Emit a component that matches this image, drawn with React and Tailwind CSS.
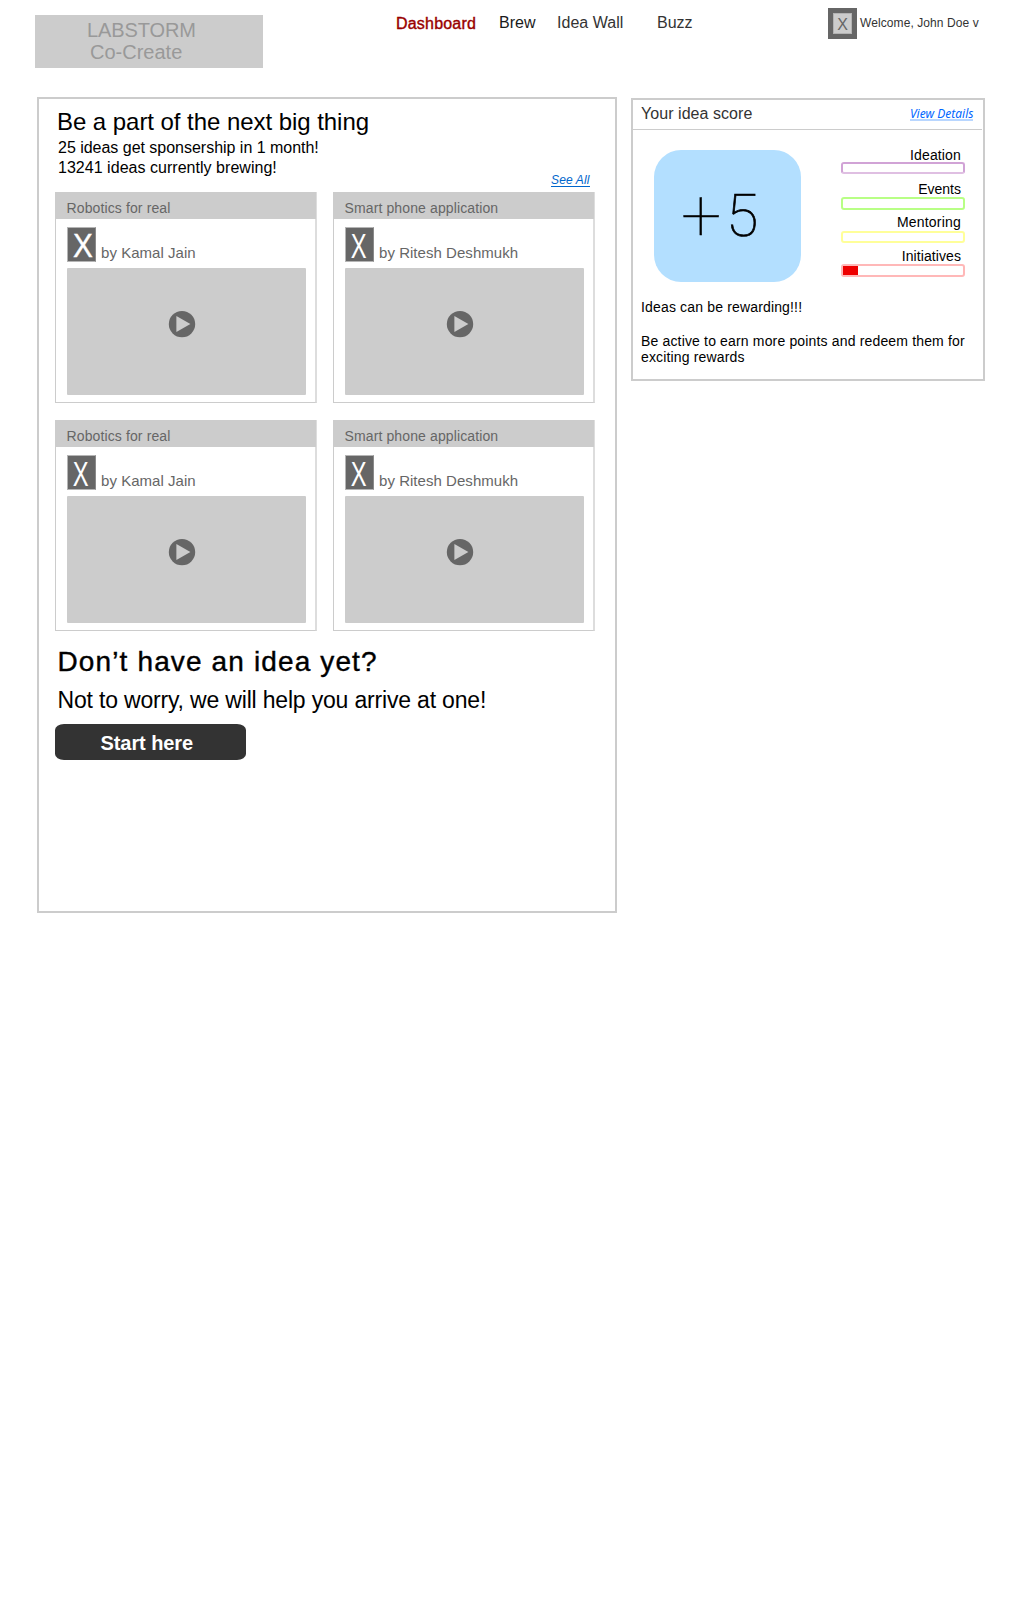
const navItems = [
  { label: 'Dashboard', cls: 'w-[103px] pt-[14px] text-[#990000] tracking-[0.2px] [-webkit-text-stroke:0.4px_#990000]' },
  { label: 'Brew', cls: 'w-[58px] pt-[13px] text-[#1a1a1a]' },
  { label: 'Idea Wall', cls: 'w-[100px] pt-[13px] text-[#333333] tracking-[0.03px]' },
  { label: 'Buzz', cls: 'w-[171px] pt-[13px] text-[#333333]' },
];

const ideas = [
  { title: 'Robotics for real', author: 'by Kamal Jain', wide: true },
  { title: 'Smart phone application', author: 'by Ritesh Deshmukh' },
  { title: 'Robotics for real', author: 'by Kamal Jain' },
  { title: 'Smart phone application', author: 'by Ritesh Deshmukh' },
];

const scores = [
  { label: 'Ideation', row: 'h-[15px] tracking-[0.15px]', bar: 'h-[12px] mb-[7px] border-[#d1a3d6] border-b-[#dfbfe2]' },
  { label: 'Events', row: 'h-[16px]', bar: 'h-[13px] mb-[4px] border-[#b8ff85]' },
  { label: 'Mentoring', row: 'h-[17px] tracking-[0.2px]', bar: 'h-[12px] mb-[5px] border-[#ffff99]' },
  { label: 'Initiatives', row: 'h-[16px] tracking-[0.08px]', bar: 'h-[13px] border-[#ffb8b8]', filled: true },
];

function IdeaCard({ title, author, wide }) {
  return (
    <article className="flex h-[211px] w-[262px] flex-col border-r-2 border-b border-l border-r-[#dddddd] border-b-[#cccccc] border-l-[#cccccc]">
      <h2 className="-mr-px h-[27px] shrink-0 bg-[#cccccc] pt-[8px] pl-[10.5px] text-[14px] leading-[16px] tracking-[0.12px] text-[#666666]">
        {title}
      </h2>
      <div className="flex h-[49px] shrink-0 pl-[11px]">
        <div className="mt-[8px] flex h-[35px] w-[29px] justify-center border border-[#b5b5b5] border-r-[#8a8a8a] bg-[#666666] text-white">
          {wide ? (
            <span className="ml-[4px] block origin-center scale-x-[0.9] text-[33px] leading-[35px] [-webkit-text-stroke:0.4px_white]">X</span>
          ) : (
            <span className="-ml-px block origin-center scale-x-[0.68] text-[35px] leading-[35px]">X</span>
          )}
        </div>
        <p className="mt-[25px] ml-[5px] text-[15px] leading-[18px] tracking-[0.04px] whitespace-nowrap text-[#666666]">{author}</p>
      </div>
      <div className="ml-[11px] h-[127px] w-[239px] rounded-[1px] bg-[#cccccc] pt-[42px] pl-[101px]">
        <svg className="block" width="28" height="28" viewBox="0 0 28 28">
          <circle cx="14" cy="14.1" r="13.2" fill="#666666" />
          <path d="M8.4 6v16L22.4 14z" fill="#cccccc" />
        </svg>
      </div>
    </article>
  );
}

export default function App() {
  return (
    <div className="h-[1600px] w-[1024px] bg-white font-['Liberation_Sans',sans-serif] text-black">
      <header className="flex h-[97px] items-start pl-[35px]">
        <div className="mt-[15px] h-[53px] w-[228px] bg-[#cccccc] pt-[4px] text-[20px] leading-[22px] text-[#999999]">
          <div className="pl-[52px] tracking-[-0.1px]">LABSTORM</div>
          <div className="pl-[55px]">Co-Create</div>
        </div>
        <nav className="ml-[133px] flex text-[16px] leading-[19px]">
          {navItems.map((n) => (
            <a key={n.label} className={n.cls}>{n.label}</a>
          ))}
        </nav>
        <div className="mt-[8px] h-[31px] w-[29px] bg-[#666666] pt-[5px] pl-[5px]">
          <div className="flex h-[21px] w-[19px] justify-center border border-[#b3b3b3] bg-[#cccccc] text-[16px] leading-[21px] text-[#666666]">
            <span className="block">X</span>
          </div>
        </div>
        <span className="mt-[16px] ml-[3px] text-[12px] leading-[14px] tracking-[0.085px] text-[#333333]">Welcome, John Doe v</span>
      </header>

      <main className="flex items-start pl-[37px]">
        <section className="h-[816px] w-[580px] border-2 border-[#cccccc]">
          <div className="flex h-[93px] justify-between pr-[25px]">
            <div className="pt-[9px] pl-[19px]">
              <h1 className="mb-[3px] -ml-px text-[24px] leading-[27px] tracking-[-0.05px]">Be a part of the next big thing</h1>
              <p className="mb-px text-[16px] leading-[19px] tracking-[-0.02px]">25 ideas get sponsership in 1 month!</p>
              <p className="text-[16px] leading-[19px] tracking-[0.03px]">13241 ideas currently brewing!</p>
            </div>
            <a className="mb-[5px] h-[14px] w-[39px] self-end border-b border-[#0066cc] text-[12px] leading-[14px] tracking-[0.15px] whitespace-nowrap text-[#0066cc] italic">
              See All
            </a>
          </div>
          <div className="grid gap-x-[16px] gap-y-[17px] pl-[16px] [grid-template-columns:262px_262px]">
            {ideas.map((idea, i) => (
              <IdeaCard key={i} {...idea} />
            ))}
          </div>
          <h2 className="mt-[15px] pl-[18.5px] text-[28px] leading-[31px] tracking-[1.13px] [-webkit-text-stroke:0.4px_black]">Don’t have an idea yet?</h2>
          <p className="mt-[10px] pl-[18.5px] text-[23px] leading-[26px] tracking-[-0.18px]">Not to worry, we will help you arrive at one!</p>
          <button className="mt-[11px] ml-[16px] block h-[36px] w-[190.5px] rounded-[9px/6px] bg-[#333333] pt-px pl-[45.5px] text-left text-[20px] leading-[34px] font-bold tracking-[-0.08px] text-white">
            Start here
          </button>
        </section>

        <aside className="mt-px ml-[14px] h-[283px] w-[354px] border-2 border-[#cccccc]">
          <div className="flex h-[30px] w-[349px] justify-between border-b border-[#cccccc] pr-[9px] pl-[8px]">
            <h2 className="pt-[4px] text-[16px] leading-[19px] tracking-[0.05px] text-[#333333]">Your idea score</h2>
            <a className="mt-[5px] h-[16px] w-[63px] border-b-2 border-[#b8d6ff] font-['Noto_Sans',sans-serif] text-[12px] leading-[18px] whitespace-nowrap text-[#0066ff] italic">
              View Details
            </a>
          </div>
          <div className="flex h-[169px]">
            <div className="mt-[20px] ml-[21px] flex h-[132px] w-[147px] rounded-[27px] bg-[#b3dfff] pl-[27px] font-[Roboto,sans-serif] font-thin [-webkit-text-stroke:0.7px_black]">
              <span className="w-[45px] text-[72px] leading-[132px] [-webkit-text-stroke:0.3px_black]">+</span>
              <span className="text-[59px] leading-[132px]">5</span>
            </div>
            <div className="mt-[17px] ml-[40px] w-[124px]">
              {scores.map((s) => (
                <div key={s.label}>
                  <div className={'pr-[4px] text-right text-[14px] leading-[16px] ' + s.row}>{s.label}</div>
                  <div className={'rounded-[3px] border-2 ' + s.bar}>
                    {s.filled && <div className="h-[9px] w-[15px] bg-[#ee0000]" />}
                  </div>
                </div>
              ))}
            </div>
          </div>
          <div className="pl-[8px] text-[14px] leading-[16px] tracking-[0.16px]">
            <p>Ideas can be rewarding!!!</p>
            <p className="mt-[18px] whitespace-nowrap">
              Be active to earn more points and redeem them for
              <br />
              exciting rewards
            </p>
          </div>
        </aside>
      </main>
    </div>
  );
}
